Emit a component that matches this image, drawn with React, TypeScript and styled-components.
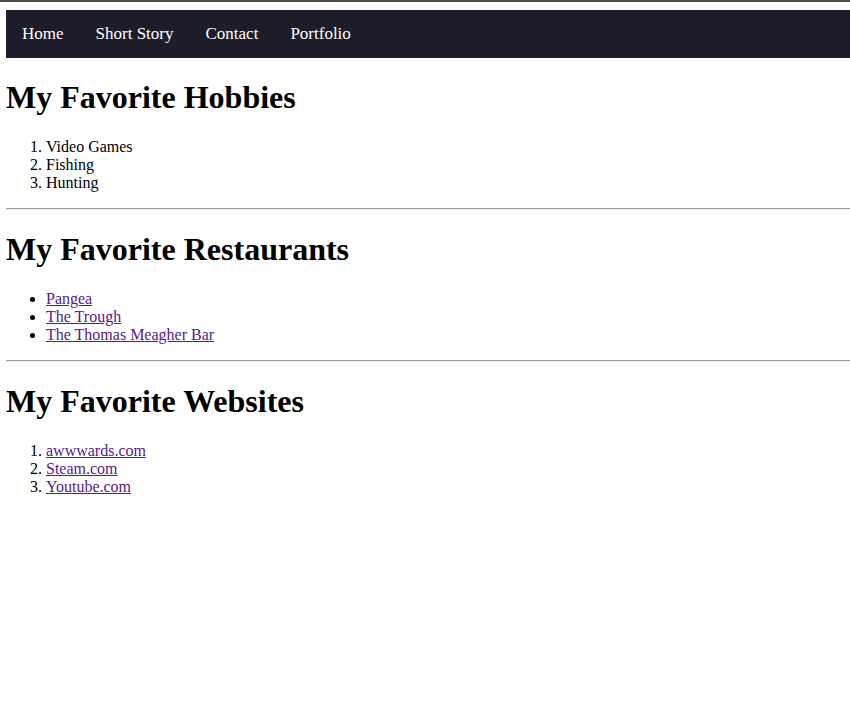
import React from "react";
import styled, { createGlobalStyle } from "styled-components";

const Global = createGlobalStyle`
  html, body { margin: 0; padding: 0; background: #ffffff; }
  body { font-family: "Liberation Serif", "Times New Roman", serif; font-size: 16px; color: #000; }
`;

const TopRule = styled.div`
  height: 2px;
  background: #4b4b4b;
`;

const Page = styled.div`
  padding: 8px 0 0 6px;
`;

const NavBar = styled.nav`
  display: flex;
  align-items: center;
  height: 48px;
  background: #1d1d29;
`;

const NavLink = styled.a`
  color: #ffffff;
  text-decoration: none;
  padding: 0 16px;
  font-size: 17px;
  line-height: 48px;
`;

const Heading = styled.h1`
  font-size: 32px;
  font-weight: bold;
  line-height: 37px;
  margin: 21.44px 0;
`;

const OrderedList = styled.ol`
  margin: 16px 0;
  padding-left: 40px;
`;

const BulletList = styled.ul`
  margin: 16px 0;
  padding-left: 40px;
`;

const Item = styled.li`
  line-height: 18px;
`;

const Link = styled.a`
  color: #551a8b;
  text-decoration: underline;
`;

const Divider = styled.hr`
  margin: 8px 0;
  border: none;
  border-top: 1px solid #9a9a9a;
  border-bottom: 1px solid #eeeeee;
  height: 0;
`;

export default function App() {
  return (
    <>
      <Global />
      <TopRule />
      <Page>
        <NavBar>
          <NavLink href="#">Home</NavLink>
          <NavLink href="#">Short Story</NavLink>
          <NavLink href="#">Contact</NavLink>
          <NavLink href="#">Portfolio</NavLink>
        </NavBar>
        <Heading>My Favorite Hobbies</Heading>
        <OrderedList>
          <Item>Video Games</Item>
          <Item>Fishing</Item>
          <Item>Hunting</Item>
        </OrderedList>
        <Divider />
        <Heading>My Favorite Restaurants</Heading>
        <BulletList>
          <Item><Link href="#">Pangea</Link></Item>
          <Item><Link href="#">The Trough</Link></Item>
          <Item><Link href="#">The Thomas Meagher Bar</Link></Item>
        </BulletList>
        <Divider />
        <Heading>My Favorite Websites</Heading>
        <OrderedList>
          <Item><Link href="#">awwwards.com</Link></Item>
          <Item><Link href="#">Steam.com</Link></Item>
          <Item><Link href="#">Youtube.com</Link></Item>
        </OrderedList>
      </Page>
    </>
  );
}
